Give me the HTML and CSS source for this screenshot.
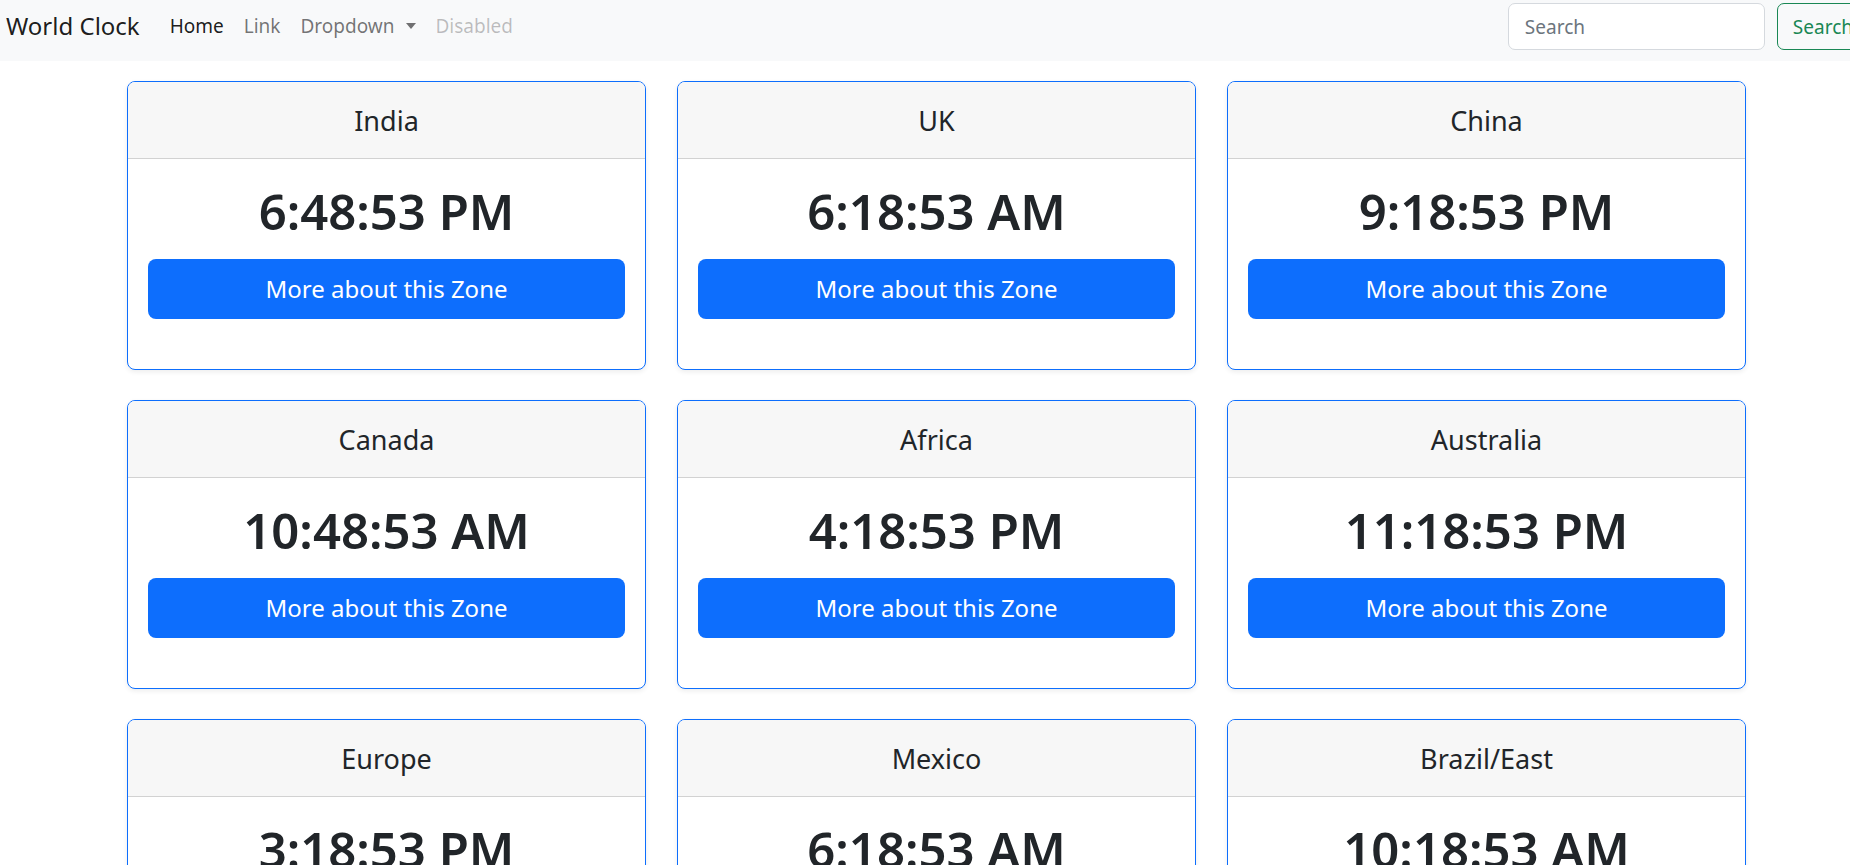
FILE: index.html
```html
<!DOCTYPE html>
<html lang="en">
<head>
<meta charset="utf-8">
<title>World Clock</title>
<link rel="stylesheet" href="styles.css">
</head>
<body>
<nav class="navbar">
  <a class="brand" href="#">World Clock</a>
  <ul class="nav-links">
    <li><a class="nav-link active" href="#">Home</a></li>
    <li><a class="nav-link" href="#">Link</a></li>
    <li><a class="nav-link" href="#">Dropdown<span class="caret"></span></a></li>
    <li><a class="nav-link disabled" href="#">Disabled</a></li>
  </ul>
  <form class="search-form">
    <input class="search-input" type="search" placeholder="Search">
    <button class="search-btn" type="button">Search</button>
  </form>
</nav>

<main class="grid">
  <div class="card">
    <div class="card-header">India</div>
    <div class="card-body">
      <h1 class="time">6:48:53 PM</h1>
      <a class="btn" href="#">More about this Zone</a>
    </div>
  </div>
  <div class="card">
    <div class="card-header">UK</div>
    <div class="card-body">
      <h1 class="time">6:18:53 AM</h1>
      <a class="btn" href="#">More about this Zone</a>
    </div>
  </div>
  <div class="card">
    <div class="card-header">China</div>
    <div class="card-body">
      <h1 class="time">9:18:53 PM</h1>
      <a class="btn" href="#">More about this Zone</a>
    </div>
  </div>
  <div class="card">
    <div class="card-header">Canada</div>
    <div class="card-body">
      <h1 class="time">10:48:53 AM</h1>
      <a class="btn" href="#">More about this Zone</a>
    </div>
  </div>
  <div class="card">
    <div class="card-header">Africa</div>
    <div class="card-body">
      <h1 class="time">4:18:53 PM</h1>
      <a class="btn" href="#">More about this Zone</a>
    </div>
  </div>
  <div class="card">
    <div class="card-header">Australia</div>
    <div class="card-body">
      <h1 class="time">11:18:53 PM</h1>
      <a class="btn" href="#">More about this Zone</a>
    </div>
  </div>
  <div class="card">
    <div class="card-header">Europe</div>
    <div class="card-body">
      <h1 class="time">3:18:53 PM</h1>
      <a class="btn" href="#">More about this Zone</a>
    </div>
  </div>
  <div class="card">
    <div class="card-header">Mexico</div>
    <div class="card-body">
      <h1 class="time">6:18:53 AM</h1>
      <a class="btn" href="#">More about this Zone</a>
    </div>
  </div>
  <div class="card">
    <div class="card-header">Brazil/East</div>
    <div class="card-body">
      <h1 class="time">10:18:53 AM</h1>
      <a class="btn" href="#">More about this Zone</a>
    </div>
  </div>
</main>
</body>
</html>
```

FILE: styles.css
```css
html {
  overflow: hidden;
}

body {
  margin: 0;
  background: #ffffff;
  color: #212529;
  font-family: "Noto Sans", "Open Sans", sans-serif;
}

a {
  text-decoration: none;
}

/* ---------- navbar ---------- */
.navbar {
  display: flex;
  align-items: flex-start;
  height: 61px;
  padding-left: 6px;
  background: #f8f9fa;
  overflow: hidden;
}

.brand {
  margin-top: 8px;
  font-size: 24px;
  line-height: 36px;
  color: rgba(0, 0, 0, 0.9);
  white-space: nowrap;
}

.nav-links {
  display: flex;
  margin: 12px 0 0 20px;
  padding: 0;
  list-style: none;
}

.nav-link {
  display: block;
  padding: 0 10px;
  font-size: 19px;
  line-height: 28px;
  color: rgba(0, 0, 0, 0.55);
  white-space: nowrap;
}

.nav-link.active {
  color: rgba(0, 0, 0, 0.9);
}

.nav-link.disabled {
  color: rgba(0, 0, 0, 0.25);
}

.caret {
  display: inline-block;
  margin-left: 11px;
  vertical-align: 4px;
  border-top: 6px solid currentColor;
  border-left: 5.5px solid transparent;
  border-right: 5.5px solid transparent;
}

.search-form {
  display: flex;
  gap: 12px;
  margin: 3px -19px 0 auto;
}

.search-input {
  box-sizing: border-box;
  width: 257px;
  height: 47px;
  padding: 0 16px;
  border: 1px solid #d5d9de;
  border-radius: 7px;
  background: #ffffff;
  font-family: inherit;
  font-size: 19px;
  color: #212529;
  outline: none;
}

.search-input::placeholder {
  color: #6c757d;
}

.search-btn {
  box-sizing: border-box;
  height: 47px;
  padding: 0 15px;
  border: 1px solid #198754;
  border-radius: 7px;
  background: transparent;
  font-family: inherit;
  font-size: 19px;
  color: #198754;
  white-space: nowrap;
}

/* ---------- cards ---------- */
.grid {
  display: grid;
  grid-template-columns: repeat(3, 519px);
  column-gap: 31px;
  row-gap: 30px;
  margin: 20px 0 0 127px;
}

.card {
  border: 1px solid #0d6efd;
  border-radius: 8px;
  background: #ffffff;
  box-shadow: 0 2px 5px rgba(0, 0, 0, 0.075);
  overflow: hidden;
  text-align: center;
}

.card-header {
  padding: 23px 0 21px;
  font-size: 27px;
  line-height: 32px;
  background: #f7f7f7;
  border-bottom: 1px solid #d2d2d2;
}

.card-body {
  padding: 24px 20px 50px;
}

.time {
  margin: 0 0 20px;
  font-size: 49px;
  font-weight: 600;
  line-height: 56px;
}

.btn {
  display: block;
  padding: 12px 0;
  border-radius: 8px;
  background: #0d6efd;
  color: #ffffff;
  font-size: 24px;
  line-height: 36px;
}
```
